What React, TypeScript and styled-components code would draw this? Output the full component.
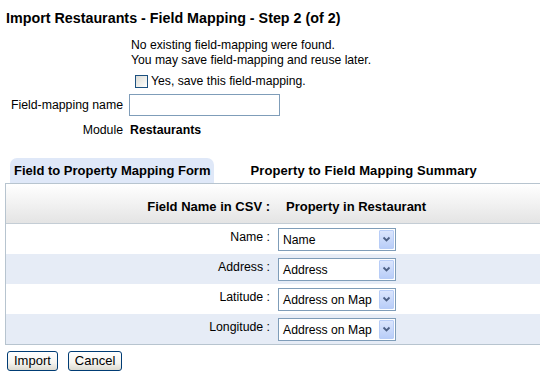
import React from "react";
import styled, { createGlobalStyle } from "styled-components";

const Global = createGlobalStyle`
  html, body { margin: 0; padding: 0; background: #fff; overflow: hidden; }
  body { font-family: "Liberation Sans", Arial, sans-serif; font-size: 12px; color: #000; }
`;

const Page = styled.div`
  width: 540px;
  height: 375px;
  overflow: hidden;
`;

const Title = styled.h1`
  margin: 0;
  padding: 10px 0 0 6px;
  font-size: 14.3px;
  line-height: 17px;
  font-weight: bold;
  color: #000;
`;

const InfoGrid = styled.div`
  display: grid;
  grid-template-columns: 123px 1fr;
  column-gap: 7px;
  margin-top: 11px;
  align-items: center;
`;

const Label = styled.div<{ $top?: number }>`
  text-align: right;
  line-height: 15px;
  font-size: 12.3px;
  margin-top: ${(p) => p.$top ?? 0}px;
`;

const Value = styled.div<{ $top?: number; $bold?: boolean }>`
  line-height: 15px;
  font-size: 12.3px;
  margin-top: ${(p) => p.$top ?? 0}px;
  font-weight: ${(p) => (p.$bold ? "bold" : "normal")};
`;

const Messages = styled.div`
  line-height: 15px;
  font-size: 12.2px;
  padding-left: 1px;
`;

const CheckLine = styled.label`
  display: flex;
  align-items: center;
  gap: 3px;
  height: 16px;
  margin-top: 5px;
  padding-left: 4px;
`;

const CheckBox = styled.span`
  width: 11px;
  height: 11px;
  border: 1px solid #1c5180;
  background: linear-gradient(135deg, #dcdcd7 0%, #f4f4f0 70%, #fff 100%);
`;

const TextInput = styled.input`
  box-sizing: border-box;
  width: 151px;
  height: 22px;
  border: 1px solid #7f9db9;
  padding: 2px 3px;
  font: inherit;
  margin-left: -1px;
`;

const Tabs = styled.div`
  display: flex;
  margin-top: 20px;
  padding-left: 10px;
  height: 25px;
  align-items: stretch;
`;

const Tab = styled.div<{ $active?: boolean }>`
  display: flex;
  align-items: center;
  padding: 0 ${(p) => (p.$active ? "4px" : "0")};
  margin-right: ${(p) => (p.$active ? "36px" : "0")};
  font-weight: bold;
  font-size: 13px;
  letter-spacing: ${(p) => (p.$active ? "0" : "0.1px")};
  background: ${(p) => (p.$active ? "#dfe8f8" : "transparent")};
  border-radius: 7px 7px 0 0;
  color: #000;
`;

const Frame = styled.div`
  margin-left: 5px;
  width: 560px;
  border: 1px solid #b7c4cf;
`;

const HeaderRow = styled.div`
  display: grid;
  grid-template-columns: 264px 1fr;
  column-gap: 16px;
  box-sizing: border-box;
  height: 40px;
  padding-top: 6px;
  align-items: center;
  background: linear-gradient(#ffffff 0%, #f3f3f3 45%, #e4e4e4 100%);
  border-bottom: 1px solid #c4cdd5;
  font-weight: bold;
  font-size: 13px;
`;

const HeaderCell = styled.div<{ $right?: boolean }>`
  text-align: ${(p) => (p.$right ? "right" : "left")};
`;

const Row = styled.div<{ $alt?: boolean }>`
  display: grid;
  grid-template-columns: 264px 1fr;
  column-gap: 8px;
  height: 30px;
  align-items: center;
  background: ${(p) => (p.$alt ? "#e6ecf6" : "#ffffff")};
`;

const RowLabel = styled.div`
  text-align: right;
  font-size: 12.3px;
  margin-top: -4px;
`;

const SelectBox = styled.div`
  position: relative;
  box-sizing: border-box;
  width: 118px;
  height: 23px;
  border: 1px solid #7f9db9;
  background: #fff;
  display: flex;
  align-items: center;
  padding-left: 4px;
  font-size: 12.2px;
  margin-top: 1px;
  white-space: nowrap;
`;

const ArrowBtn = styled.span`
  position: absolute;
  right: 1px;
  top: 1px;
  width: 15px;
  height: 19px;
  box-sizing: border-box;
  border: 1px solid #b8cdf7;
  border-radius: 1px;
  background: linear-gradient(#dbe6fd, #b9cdf8);
  display: flex;
  align-items: center;
  justify-content: center;
`;

const Buttons = styled.div`
  display: flex;
  gap: 10px;
  padding: 6px 0 0 7px;
`;

const Button = styled.button`
  box-sizing: border-box;
  height: 20px;
  padding: 0 6px;
  font: 13px "Liberation Sans", Arial, sans-serif;
  color: #000;
  border: 1px solid #003c74;
  border-radius: 3px;
  background: linear-gradient(#ffffff 0%, #f5f4ef 60%, #dcdad0 100%);
  line-height: 16px;
`;

const Chevron = () => (
  <svg width="9" height="7" viewBox="0 0 9 7">
    <path d="M1.5 1.5 L4.5 4.5 L7.5 1.5" fill="none" stroke="#4d6185" strokeWidth="1.8" />
  </svg>
);

const rows = [
  { label: "Name", value: "Name" },
  { label: "Address", value: "Address" },
  { label: "Latitude", value: "Address on Map" },
  { label: "Longitude", value: "Address on Map" },
];

export default function App() {
  return (
    <Page>
      <Global />
      <Title>Import Restaurants - Field Mapping - Step 2 (of 2)</Title>
      <InfoGrid>
        <div />
        <Messages>
          No existing field-mapping were found.
          <br />
          You may save field-mapping and reuse later.
          <CheckLine>
            <CheckBox />
            Yes, save this field-mapping.
          </CheckLine>
        </Messages>
        <Label $top={5}>Field-mapping name</Label>
        <Value $top={5}>
          <TextInput type="text" />
        </Value>
        <Label $top={7}>Module</Label>
        <Value $top={7} $bold>
          Restaurants
        </Value>
      </InfoGrid>
      <Tabs>
        <Tab $active>Field to Property Mapping Form</Tab>
        <Tab>Property to Field Mapping Summary</Tab>
      </Tabs>
      <Frame>
        <HeaderRow>
          <HeaderCell $right>Field Name in CSV :</HeaderCell>
          <HeaderCell>Property in Restaurant</HeaderCell>
        </HeaderRow>
        {rows.map((r, i) => (
          <Row key={r.label} $alt={i % 2 === 1}>
            <RowLabel>{r.label} :</RowLabel>
            <SelectBox>
              {r.value}
              <ArrowBtn>
                <Chevron />
              </ArrowBtn>
            </SelectBox>
          </Row>
        ))}
      </Frame>
      <Buttons>
        <Button>Import</Button>
        <Button>Cancel</Button>
      </Buttons>
    </Page>
  );
}
